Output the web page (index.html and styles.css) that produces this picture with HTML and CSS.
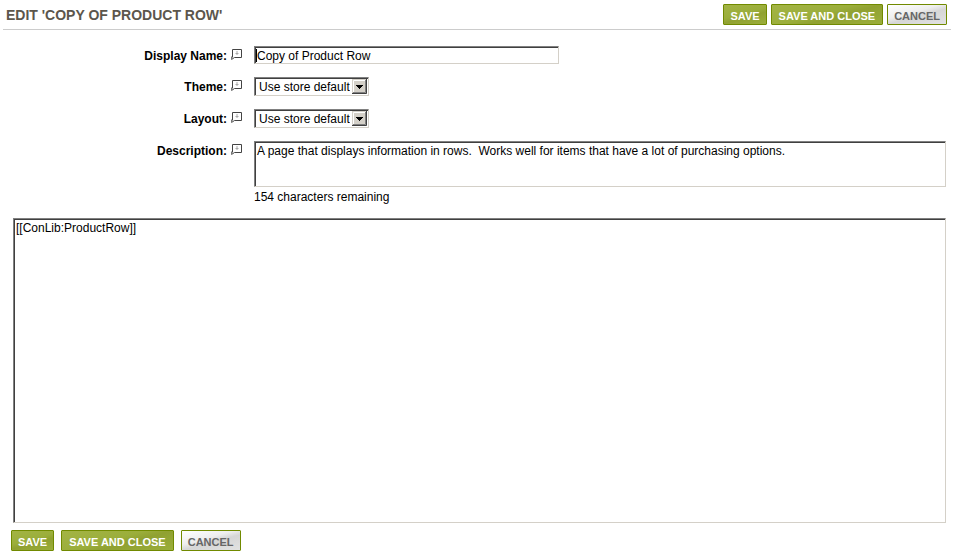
FILE: index.html
```html
<!DOCTYPE html>
<html lang="en">
<head>
<meta charset="utf-8">
<title>Edit 'Copy of Product Row'</title>
<link rel="stylesheet" href="styles.css">
</head>
<body>

<svg class="defs" width="0" height="0" aria-hidden="true">
	<symbol id="tip" viewBox="0 0 13 11">
		<path d="M2.5 8.5V.5h9v8H4.5l-3 2" fill="#fff" stroke="#444"/>
		<path d="M1.5 7.5v3" fill="none" stroke="#777"/>
		<path d="M7 2v4M5.5 4.5h3" stroke="#aaa" fill="none"/>
	</symbol>
	<symbol id="drop" viewBox="0 0 15 15">
		<path d="M0 0h15v15H0z" fill="#d4d0c8"/>
		<path d="M1.5 13V1.5H13" fill="none" stroke="#fff"/>
		<path d="M1 13.5h12.5V1" fill="none" stroke="#808080"/>
		<path d="M0 14.5h14.5V0" fill="none" stroke="#404040"/>
		<path d="M4 6h7v1h-1v1H9v1H8v1H7V9H6V8H5V7H4z" fill="#000"/>
	</symbol>
</svg>

<form>
	<header class="page-header">
		<h1>EDIT 'COPY OF PRODUCT ROW'</h1>
		<div class="buttons">
			<button type="button" class="btn">SAVE</button>
			<button type="button" class="btn btn-close">SAVE AND CLOSE</button>
			<button type="button" class="btn btn-cancel">CANCEL</button>
		</div>
	</header>

	<div class="fields">
		<div class="label">
			<label for="name">Display Name:</label>
			<svg class="tip"><use href="#tip"/></svg>
		</div>
		<div class="field">
			<input type="text" id="name" class="text sunken" value="Copy of Product Row">
			<span class="caret"></span>
		</div>

		<div class="label">
			<label for="theme">Theme:</label>
			<svg class="tip"><use href="#tip"/></svg>
		</div>
		<div class="field">
			<span class="select sunken">
				<select id="theme"><option>Use store default</option></select>
				<svg class="drop"><use href="#drop"/></svg>
			</span>
		</div>

		<div class="label">
			<label for="layout">Layout:</label>
			<svg class="tip"><use href="#tip"/></svg>
		</div>
		<div class="field">
			<span class="select sunken">
				<select id="layout"><option>Use store default</option></select>
				<svg class="drop"><use href="#drop"/></svg>
			</span>
		</div>

		<div class="label">
			<label for="description">Description:</label>
			<svg class="tip"><use href="#tip"/></svg>
		</div>
		<div class="field">
			<textarea id="description" class="description sunken">A page that displays information in rows.  Works well for items that have a lot of purchasing options.</textarea>
			<div class="remaining">154 characters remaining</div>
		</div>
	</div>

	<textarea class="editor sunken" aria-label="Content">[[ConLib:ProductRow]]</textarea>

	<footer class="buttons buttons-bottom">
		<button type="button" class="btn">SAVE</button>
		<button type="button" class="btn btn-close">SAVE AND CLOSE</button>
		<button type="button" class="btn btn-cancel">CANCEL</button>
	</footer>
</form>

</body>
</html>
```

FILE: styles.css
```css
body {
	margin: 0;
	background: #fff;
	color: #000;
	font: 12px/14px "Liberation Sans", Arial, sans-serif;
}
input, select, textarea, button {
	font: inherit;
	color: inherit;
	margin: 0;
	box-sizing: border-box;
}
.defs {
	position: absolute;
}

/* header */
.page-header {
	display: flex;
	justify-content: space-between;
	align-items: center;
	margin: 0 2px 0 3px;
	padding: 4px 4px 4px 3px;
	border-bottom: 1px solid #ccc;
}
h1 {
	margin: 0;
	color: #5c564c;
	font-size: 14px;
	line-height: 20px;
}

/* buttons */
.buttons {
	display: flex;
	gap: 4px;
}
.buttons-bottom {
	gap: 7px;
	padding: 7px 11px;
}
.btn {
	height: 21px;
	padding: 2px 6px 0;
	border: 1px solid #718a00;
	border-radius: 1px;
	background: linear-gradient(165deg, #a3b445 0%, #9bae3b 45%, #90a131 60%, #9bae3b 100%);
	color: #fff;
	font-size: 11px;
	font-weight: bold;
}
.btn-close {
	padding: 2px 7px 0;
}
.btn-cancel {
	background: linear-gradient(165deg, #fff 0%, #eee 40%, #d6d6d6 56%, #e2e2e2 100%);
	color: #666;
}

/* fields */
.fields {
	display: grid;
	grid-template-columns: 243px 1fr;
	column-gap: 11px;
	row-gap: 13px;
	padding: 16px 7px 14px 0;
}
.label {
	display: flex;
	justify-content: flex-end;
	gap: 3px;
	padding-top: 3px;
	font-weight: bold;
}
.tip {
	width: 13px;
	height: 11px;
}
.field {
	position: relative;
}
.sunken {
	border: 1px solid #d4d0c8;
	border-top-color: #808080;
	border-left-color: #808080;
	border-radius: 0;
	background: #fff;
	box-shadow: inset 1px 1px #404040;
	outline: 0;
}
.text {
	display: block;
	width: 305px;
	height: 18px;
	padding: 2px 2px 0;
}
.caret {
	position: absolute;
	left: 2px;
	top: 3px;
	width: 1px;
	height: 13px;
	background: #000;
}
.select {
	display: inline-flex;
	position: relative;
	vertical-align: top;
	padding: 1px 1px 0;
}
.select select {
	appearance: none;
	width: 111px;
	height: 16px;
	padding: 0 17px 0 3px;
	border: 0;
	background: none;
}
.drop {
	position: absolute;
	right: 1px;
	top: 1px;
	width: 15px;
	height: 15px;
	pointer-events: none;
}
textarea {
	display: block;
	padding: 2px;
	resize: none;
	overflow: hidden;
}
.description {
	width: 100%;
	height: 46px;
}
.remaining {
	margin-top: 3px;
}
.editor {
	width: calc(100% - 20px);
	height: 305px;
	margin: 0 7px 0 13px;
}
```
